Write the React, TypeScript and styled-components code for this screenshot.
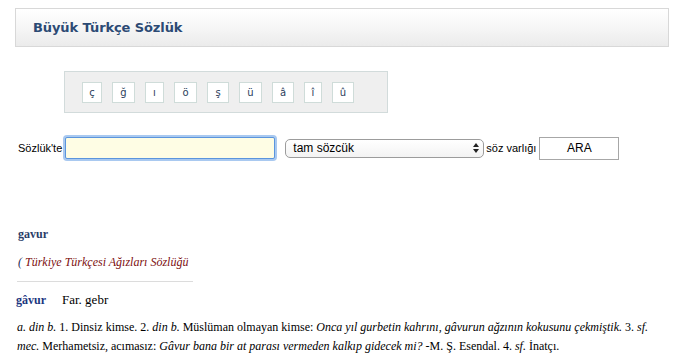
import React from "react";
import styled, { createGlobalStyle } from "styled-components";

const Global = createGlobalStyle`
  html, body { margin: 0; padding: 0; background: #fff; }
  body { font-family: "Liberation Sans", Arial, sans-serif; }
`;

const Page = styled.div`
  width: 674px;
  padding-top: 8px;
`;

const Header = styled.div`
  margin: 0 5px 0 15px;
  height: 37px;
  border: 1px solid #d8d8d8;
  background: linear-gradient(#ffffff 0%, #f6f6f6 50%, #ebebeb 100%);
  display: flex;
  align-items: center;
  padding-left: 17px;
`;

const Title = styled.h1`
  margin: 0;
  font-family: "DejaVu Sans", Verdana, sans-serif;
  font-size: 13px;
  font-weight: bold;
  color: #2c4a74;
  letter-spacing: -0.1px;
`;

const CharPanel = styled.div`
  margin: 24px 0 0 64px;
  width: 305px;
  height: 40px;
  border: 1px solid #d2dbdb;
  background: #efefef;
  display: flex;
  align-items: center;
  gap: 10px;
  padding-left: 17px;
  box-sizing: content-box;
`;

const CharButton = styled.span<{ $w: number }>`
  width: ${(p) => p.$w - 2}px;
  height: 19px;
  border: 1px solid #cfdcd9;
  background: #fff;
  display: flex;
  align-items: center;
  justify-content: center;
  font-family: "DejaVu Sans", Verdana, sans-serif;
  font-size: 10px;
  color: #2c3e5c;
`;

const FormRow = styled.div`
  margin-top: 23px;
  display: flex;
  align-items: center;
  padding-left: 18px;
  height: 24px;
`;

const Label = styled.span`
  font-size: 11px;
  color: #000;
`;

const TextInput = styled.div`
  margin-left: 3px;
  width: 208px;
  height: 20px;
  background: #fefde4;
  border: 1px solid #5b95dd;
  border-radius: 2px;
  box-shadow: 0 0 0 2px #a9c9f0;
`;

const Select = styled.div`
  margin-left: 10px;
  width: 186px;
  height: 17px;
  border: 1px solid #9c9c9c;
  border-radius: 5px;
  background: linear-gradient(#ffffff, #f3f3f3);
  display: flex;
  align-items: center;
  justify-content: space-between;
  padding: 0 4px 0 7px;
  box-sizing: content-box;
  font-size: 12px;
  color: #000;
`;

const Arrows = styled.svg`
  width: 6px;
  height: 10px;
`;

const SideLabel = styled.span`
  margin-left: 2px;
  font-size: 11px;
  color: #000;
`;

const SearchButton = styled.div`
  margin-left: 3px;
  width: 78px;
  height: 21px;
  border: 1px solid #a7a7a7;
  background: #fff;
  display: flex;
  align-items: center;
  justify-content: center;
  font-size: 12px;
  color: #000;
`;

const Results = styled.div`
  margin-top: 67px;
  padding-left: 18px;
  width: 640px;
  font-family: "Liberation Serif", "Times New Roman", serif;
`;

const Entry = styled.div`
  font-size: 12px;
  font-weight: bold;
  color: #2a3c68;
  line-height: 14px;
`;

const Source = styled.div`
  margin-top: 14px;
  font-size: 12px;
  font-style: italic;
  color: #7d0f10;
  line-height: 14px;
`;

const Paren = styled.span`
  color: #1e2b55;
`;

const Divider = styled.hr`
  margin: 12px 0 0 -1px;
  width: 176px;
  border: 0;
  border-top: 1px solid #dcdcdc;
  height: 0;
`;

const HeadRow = styled.div`
  margin: 10px 0 0 -2px;
  display: flex;
  align-items: baseline;
  gap: 16px;
  line-height: 16px;
`;

const HeadWord = styled.span`
  font-size: 12px;
  font-weight: bold;
  color: #1c3680;
`;

const Origin = styled.span`
  font-size: 13px;
  color: #000;
`;

const Definition = styled.p`
  margin: 10px 0 0 -1px;
  font-size: 12px;
  line-height: 19px;
  color: #000;
`;

const chars: [string, number][] = [
  ["ç", 20],
  ["ğ", 23],
  ["ı", 19],
  ["ö", 23],
  ["ş", 22],
  ["ü", 23],
  ["â", 22],
  ["î", 18],
  ["û", 22],
];

export default function App() {
  return (
    <Page>
      <Global />
      <Header>
        <Title>Büyük Türkçe Sözlük</Title>
      </Header>
      <CharPanel>
        {chars.map(([c, w]) => (
          <CharButton key={c} $w={w}>
            {c}
          </CharButton>
        ))}
      </CharPanel>
      <FormRow>
        <Label>Sözlük'te</Label>
        <TextInput />
        <Select>
          <span>tam sözcük</span>
          <Arrows viewBox="0 0 6 10">
            <path d="M3 0 L6 4 L0 4 Z" fill="#222" />
            <path d="M3 10 L6 6 L0 6 Z" fill="#222" />
          </Arrows>
        </Select>
        <SideLabel>söz varlığı</SideLabel>
        <SearchButton>ARA</SearchButton>
      </FormRow>
      <Results>
        <Entry>gavur</Entry>
        <Source>
          <Paren>( </Paren>Türkiye Türkçesi Ağızları Sözlüğü
        </Source>
        <Divider />
        <HeadRow>
          <HeadWord>gâvur</HeadWord>
          <Origin>Far. gebr</Origin>
        </HeadRow>
        <Definition>
          <i>a. din b.</i> 1. Dinsiz kimse. 2. <i>din b.</i> Müslüman olmayan kimse:{" "}
          <i>Onca yıl gurbetin kahrını, gâvurun ağzının kokusunu çekmiştik.</i> 3. <i>sf.</i>{" "}
          <i>mec.</i> Merhametsiz, acımasız:{" "}
          <i>Gâvur bana bir at parası vermeden kalkıp gidecek mi?</i> -M. Ş. Esendal. 4.{" "}
          <i>sf.</i> İnatçı.
        </Definition>
      </Results>
    </Page>
  );
}
